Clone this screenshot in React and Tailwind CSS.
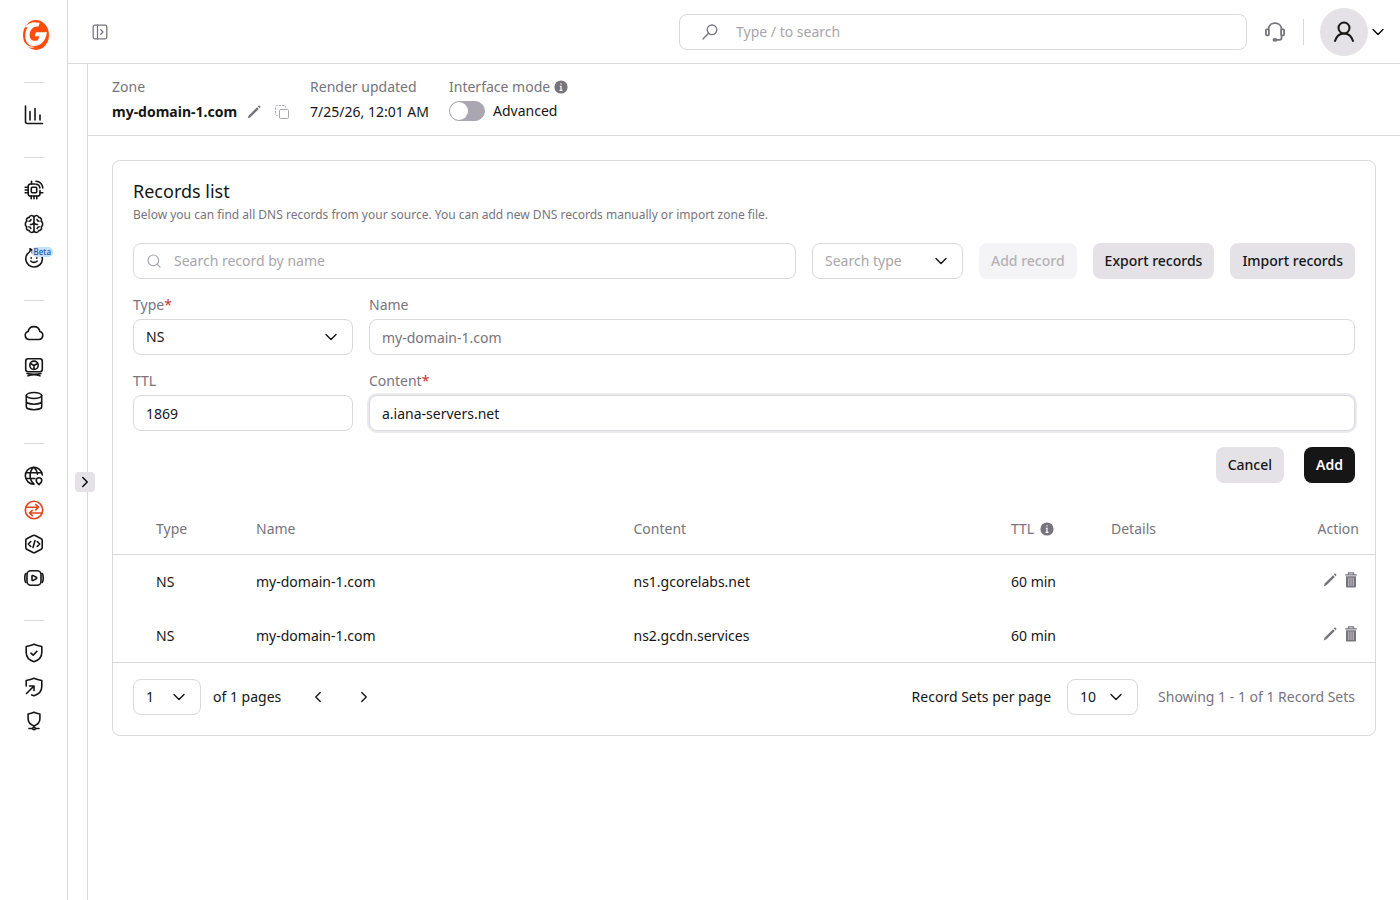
import { useState } from "react";
import clsx from "clsx";
import { ChevronDown, ChevronLeft, ChevronRight, Search } from "lucide-react";

const FIELD =
  "h-9 w-full rounded-lg border border-[#d9d8dc] bg-white px-3 text-sm text-[#161616] outline-none";

const Icon = ({ children, className = "size-5", stroke = "1.6", box = "0 0 20 20" }) => (
  <svg
    viewBox={box}
    className={clsx("shrink-0", className)}
    fill="none"
    stroke="currentColor"
    strokeWidth={stroke}
    strokeLinecap="round"
    strokeLinejoin="round"
    aria-hidden="true"
  >
    {children}
  </svg>
);

const Logo = () => (
  <svg viewBox="0 0 78 90" className="h-[30px] w-[26px]" aria-hidden="true">
    <ellipse cx="39" cy="45" rx="39" ry="45" fill="#ff4c0c" />
    <path
      d="M5 22C16 8 32 4 50 9l-4 11C30 17 21 30 20 44c0 13 7 19 19 18l6-1 4-12H35l4-12h33C68 63 54 78 33 78 18 78 8 68 7 50 6 40 9 30 14 22Z"
      fill="#fff"
    />
    <path d="M4 66c8 12 20 16 32 14-10 6-22 3-28-6Z" fill="#fff" />
  </svg>
);

const Chip = () => (
  <Icon>
    <path d="M11 4H6.5A2.3 2.3 0 0 0 4.2 6.3v7.4A2.3 2.3 0 0 0 6.5 16h7.2a2.3 2.3 0 0 0 2.3-2.3V10.5" />
    <rect x="7.3" y="7.3" width="5.4" height="5.4" rx="1" />
    <path d="M1.2 7.2h3M1.2 10h3M1.2 12.800h3M7.2 16v2.8M10 16v2.8M12.8 16v2.8M16 12.8h2.8M7.5 1.2V4M12 1.2A7 7 0 0 1 18.8 8M12 4.2A4 4 0 0 1 15.8 8" />
  </Icon>
);

const Brain = () => (
  <Icon>
    <path d="M10 3.500v13M10 3.500C9.500 1 6 .600 5.300 3.400 3 3.200 1.800 5.500 2.900 7.200.800 8.300.800 11.500 2.700 12.700 1.800 15 3.300 16.700 5.300 16.600 6 19.200 9.500 19 10 16.500M10 3.500C10.500 1 14 .600 14.700 3.400 17 3.200 18.200 5.500 17.100 7.200c2.100 1.100 2.100 4.300.2 5.500.9 2.300-.6 4-2.600 3.900C14 19.200 10.500 19 10 16.500" />
    <path d="M10 8.500C9.500 10 8 10.700 6.500 10.500M10 8.500c.5 1.500 2 2.200 3.500 2M7 5.500C6.800 6.500 6 7.200 5 7.200M13 5.500c.2 1 1 1.700 2 1.700M6.800 14.500c-.2-1-1-1.600-2-1.700M13.200 14.500c.2-1 1-1.600 2-1.700" />
  </Icon>
);

const Assistant = () => (
  <span className="relative block">
    <Icon>
      <path d="M16.500 5.500A8.300 8.300 0 1 1 3.300 6C5.200 4.600 7.300 3.200 6 .8c2 .9 2.800 2.300 2.300 4" />
      <path d="M7.200 9.800v.4M12.8 9.800v.4M6.800 13c1.800 1.900 4.600 1.900 6.400 0" />
    </Icon>
    <span className="absolute -top-px left-2 rounded-full bg-[#c3dffa] px-0.5 text-[8px] leading-[10px] font-medium text-[#22549b]">
      Beta
    </span>
  </span>
);

const groups = [
  [
    {
      name: "Reports",
      icon: (
        <Icon>
          <path d="M1.5 1v15.5a2 2 0 0 0 2 2h15M6 6.500v8.500M11 3.500V15M16 10v5" />
        </Icon>
      ),
    },
  ],
  [
    { name: "Edge compute", icon: <Chip /> },
    { name: "Everywhere AI", icon: <Brain /> },
    { name: "AI assistant", icon: <Assistant /> },
  ],
  [
    {
      name: "Cloud",
      icon: (
        <Icon>
          <path d="M5 16.5a4.1 4.1 0 0 1-.9-8A6 6 0 0 1 15.9 8.500a4.1 4.1 0 0 1-.9 8Z" />
        </Icon>
      ),
    },
    {
      name: "Hosting",
      icon: (
        <Icon>
          <rect x="1.7" y="1.8" width="16.6" height="13" rx="2.5" />
          <circle cx="10" cy="8.3" r="4.2" />
          <path d="M10 8.5v3.8M10 8.500 6.800 6.700M10 8.500l3.200-1.800M3 16.500c4 .8 10 .8 14 0M4 18.800c3.500-1.300 8.500-1.300 12 0" />
        </Icon>
      ),
    },
    {
      name: "Storage",
      icon: (
        <Icon>
          <ellipse cx="10" cy="4.5" rx="7.7" ry="3" />
          <path d="M2.3 4.500v11.200c0 1.700 3.400 3 7.700 3s7.700-1.300 7.700-3V4.500M2.300 10.200c0 1.700 3.400 3 7.700 3s7.700-1.300 7.700-3" />
        </Icon>
      ),
    },
  ],
  [
    {
      name: "CDN",
      icon: (
        <Icon>
          <path d="M18.3 9A8.5 8.5 0 1 0 10 18.2M1.8 6.800h16M1.800 12.500h9M9.800 1.200C4.800 5.500 4.800 13.500 10 18.200M9.800 1.200c2.200 2 3.400 4.400 3.700 7" />
          <path d="M15 18.600c-1.800-1.500-2.800-2.800-2.800-4.100a2.800 2.800 0 0 1 5.600 0c0 1.300-1 2.600-2.800 4.100Z" />
        </Icon>
      ),
    },
    {
      name: "DNS",
      active: true,
      icon: (
        <Icon>
          <circle cx="10" cy="10" r="8.7" />
          <path d="M2 7.200h12.500M11.700 4.500l2.800 2.700-2.800 2.700M18 13H5.500M8.300 10.300 5.500 13l2.800 2.700" />
        </Icon>
      ),
    },
    {
      name: "FastEdge",
      icon: (
        <Icon>
          <path d="M9 1.500a2 2 0 0 1 2 0l6.300 3.300a1.600 1.600 0 0 1 .9 1.500v7.400a1.600 1.600 0 0 1-.9 1.500L11 18.500a2 2 0 0 1-2 0l-6.300-3.300a1.600 1.600 0 0 1-.9-1.500V6.300a1.600 1.600 0 0 1 .9-1.500Z" />
          <path d="m6.800 7.500-2.500 2.500 2.500 2.500M13.200 7.500l2.500 2.500-2.500 2.500M11 6.500l-2 7" />
        </Icon>
      ),
    },
    {
      name: "Streaming",
      icon: (
        <Icon>
          <rect x="3" y="2.7" width="14" height="14.6" rx="4" />
          <path d="M2 5.500C.8 6 .8 7 .8 10s0 4 1.200 4.500M18 5.500c1.200.5 1.200 1.500 1.200 4.500s0 4-1.200 4.500M8 8.300v3.400c0 .8.7 1 1.300.7l3-1.700c.6-.4.6-1 0-1.400l-3-1.700C8.700 7.300 8 7.500 8 8.300Z" />
        </Icon>
      ),
    },
  ],
  [
    {
      name: "Web security",
      icon: (
        <Icon>
          <path d="M10 1.300c2.500 1.200 5 1.800 7.800 2.200v6c0 4.700-3 7.700-7.800 9.300-4.800-1.600-7.800-4.600-7.800-9.300v-6C5 3.100 7.500 2.500 10 1.300Z" />
          <path d="m7 10.200 2.200 2 3.600-3.800" />
        </Icon>
      ),
    },
    {
      name: "DDoS protection",
      icon: (
        <Icon>
          <path d="M2.200 9V3.500C5 3.100 7.500 2.500 10 1.300c2.500 1.200 5 1.800 7.800 2.200v6c0 4.700-3 7.700-7.800 9.300l-2.300-.9M2.500 16.500l7.500-7.500M5.500 9H10v4.500" />
        </Icon>
      ),
    },
    {
      name: "WAAP",
      icon: (
        <Icon>
          <path d="M10 1.300c1.800.9 3.600 1.400 5.900 1.700v4.700c0 3.400-2 5.800-5.900 7.200-3.900-1.400-5.900-3.800-5.900-7.200V3c2.300-.3 4.100-.8 5.900-1.700ZM10 15v1M5 17.500h3.500M11.500 17.500H15" />
          <circle cx="10" cy="17.500" r="1.300" />
        </Icon>
      ),
    },
  ],
];

const Pencil = () => (
  <svg viewBox="0 0 16 16" className="size-4 shrink-0" fill="currentColor" aria-hidden="true">
    <path d="m1.700 14.500 1-2.900 8.400-8.400 1.700 1.700-8.400 8.400-2.700 1.200ZM11.800 2.500l.7-.7c.4-.4.8-.4 1.200 0l.5.5c.4.4.4.8 0 1.200l-.7.7Z" />
  </svg>
);

const Trash = () => (
  <svg viewBox="0 0 14 18" className="h-[18px] w-3.5 shrink-0" aria-hidden="true">
    <path d="M4.500 3.300V1.800h5v1.500M1.200 3.900h11.600" fill="none" stroke="currentColor" strokeWidth="1.3" />
    <path d="M2 5.200h10v10c0 .8-.5 1.300-1.300 1.300H3.300c-.8 0-1.300-.5-1.300-1.300Z" fill="currentColor" />
    <path d="M4.800 6.500v8.500M7 6.500v8.500M9.200 6.500v8.500" stroke="#fff" strokeWidth=".6" />
  </svg>
);

const Info = () => (
  <svg viewBox="0 0 14 14" className="size-3.5 shrink-0" aria-hidden="true">
    <circle cx="7" cy="7" r="6.6" fill="#77747d" />
    <path d="M7 3.200v1.400M5.800 6.300H7v3.900M5.500 10.300h3" fill="none" stroke="#fff" strokeWidth="1.2" />
  </svg>
);

const Select = ({ className, chevron = "right-3", children, ...rest }) => (
  <div className={clsx("relative", className)}>
    <select {...rest} className={clsx(FIELD, "appearance-none", rest.value === "" && "text-[#a8a6ac]")}>
      {children}
    </select>
    <ChevronDown
      className={clsx("pointer-events-none absolute top-2 size-5 text-[#161616]", chevron)}
      strokeWidth={1.7}
    />
  </div>
);

const Button = ({ tone = "secondary", children, ...rest }) => (
  <button
    type="button"
    {...rest}
    className={clsx(
      "h-9 shrink-0 rounded-lg px-3 text-sm",
      tone === "secondary" && "bg-[#e4e2e7] font-medium text-[#161616]",
      tone === "disabled" && "bg-[#f4f3f5] font-medium text-[#b4b2b7]",
      tone === "primary" && "bg-[#161616] font-semibold text-white"
    )}
  >
    {children}
  </button>
);

const Label = ({ htmlFor, required, children }) => (
  <label htmlFor={htmlFor} className="mb-1 block text-sm leading-5 text-[#77747d]">
    {children}
    {required && <span className="text-[#c9342b]">*</span>}
  </label>
);

const Sidebar = () => (
  <nav className="w-[68px] shrink-0 border-r border-[#d9d8dc]" aria-label="Products">
    <a href="#home" aria-label="Home" className="ml-[23px] flex h-[82px] pt-5">
      <Logo />
    </a>
    {groups.map((items) => (
      <div key={items[0].name} className="flex flex-col items-center pb-8">
        <div className="h-px w-5 bg-[#d9d8dc]" />
        <ul className="mt-[22px] flex flex-col gap-3.5">
          {items.map((item) => (
            <li key={item.name}>
              <a
                href="#product"
                aria-label={item.name}
                className={clsx("block", item.active ? "text-[#e0471c]" : "text-[#161616]")}
              >
                {item.icon}
              </a>
            </li>
          ))}
        </ul>
      </div>
    ))}
  </nav>
);

const TopBar = () => (
  <header className="flex h-16 items-center border-b border-[#d9d8dc] pr-3 pl-6">
    <button type="button" aria-label="Expand menu" className="text-[#77747d]">
      <Icon className="size-4" stroke="1.3" box="0 0 16 16">
        <rect x="1.2" y="1.2" width="13.6" height="13.6" rx="1.5" />
        <path d="M5.500 1.200v13.600M8.800 5.800 11 8l-2.200 2.200" />
      </Icon>
    </button>
    <label className="ml-auto flex h-9 w-[568px] items-center rounded-lg border border-[#d9d8dc] px-5">
      <Icon className="mx-0.5 size-4 text-[#77747d]" stroke="1.3" box="0 0 16 16">
        <circle cx="10" cy="5.800" r="4.800" />
        <path d="M6.500 9.300 1 15" />
      </Icon>
      <input
        type="text"
        placeholder="Type / to search"
        className="ml-4 w-full text-sm outline-none placeholder:text-[#a8a6ac]"
      />
    </label>
    <button type="button" aria-label="Support" className="ml-[18px] text-[#77747d]">
      <Icon className="size-5" stroke="1.8">
        <path d="M3.500 7.500C3.500 3.500 6.300 1.200 10 1.200s6.500 2.300 6.500 6.300M16.500 13.500V16c0 1.200-.8 1.800-2 1.800H11" />
        <rect x=".9" y="7.300" width="3" height="6" rx="1" />
        <rect x="16.1" y="7.300" width="3" height="6" rx="1" />
        <ellipse cx="10" cy="17.800" rx="1.600" ry="1" fill="currentColor" />
      </Icon>
    </button>
    <div className="ml-[18px] h-[26px] w-px bg-[#d9d8dc]" />
    <button type="button" aria-label="Account" className="ml-4 flex items-center">
      <span className="grid size-12 place-items-center rounded-full bg-[#e4e2e7] text-[#161616]">
        <Icon className="size-6" stroke="2" box="0 0 24 24">
          <circle cx="12" cy="8" r="5.500" />
          <path d="M3 21c1.500-5 5-7.500 9-7.500s7.500 2.500 9 7.500" />
        </Icon>
      </span>
      <ChevronDown className="size-5" strokeWidth={1.5} />
    </button>
  </header>
);

const ZoneBar = () => (
  <section className="flex h-[72px] gap-5 border-b border-[#d9d8dc] px-6 pt-[13px] text-sm leading-5">
    <div>
      <div className="text-[#77747d]">Zone</div>
      <div className="mt-[5px] flex items-center text-[#77747d]">
        <strong className="font-bold text-[#161616]">my-domain-1.com</strong>
        <button type="button" aria-label="Edit zone" className="ml-[9px]">
          <Pencil />
        </button>
        <button type="button" aria-label="Copy zone" className="ml-3 text-[#a8a6ac]">
          <Icon className="size-4" stroke="1" box="0 0 16 16">
            <rect x="5.500" y="5.500" width="9" height="9" rx="1" />
            <path d="M3 11.500H2.500a1 1 0 0 1-1-1V2.500a1 1 0 0 1 1-1h8a1 1 0 0 1 1 1V3" strokeDasharray="1.5 2" />
          </Icon>
        </button>
      </div>
    </div>
    <div>
      <div className="text-[#77747d]">Render updated</div>
      <div className="mt-[5px] text-[#161616]">7/25/26, 12:01 AM</div>
    </div>
    <div>
      <div className="flex items-center gap-1 text-[#77747d]">
        Interface mode
        <Info />
      </div>
      <label className="mt-1 flex items-center gap-2 text-[#161616]">
        <input
          type="checkbox"
          role="switch"
          className="h-5 w-9 appearance-none rounded-full border border-[#aba7b2] bg-[#aba7b2] before:block before:size-[18px] before:rounded-full before:bg-white checked:bg-[#161616] checked:before:translate-x-4"
        />
        Advanced
      </label>
    </div>
  </section>
);

const records = [
  { type: "NS", name: "my-domain-1.com", content: "ns1.gcorelabs.net", ttl: "60 min" },
  { type: "NS", name: "my-domain-1.com", content: "ns2.gcdn.services", ttl: "60 min" },
];

const RecordForm = () => {
  const [form, setForm] = useState({ type: "NS", name: "", ttl: "1869", content: "a.iana-servers.net" });
  const update = (key) => (e) => setForm({ ...form, [key]: e.target.value });

  return (
    <form className="mt-4 px-5" onSubmit={(e) => e.preventDefault()}>
      <div className="grid grid-cols-[220px_1fr] gap-4">
        <div>
          <Label htmlFor="type" required>Type</Label>
          <Select id="type" value={form.type} onChange={update("type")}>
            <option>NS</option>
            <option>A</option>
            <option>CNAME</option>
          </Select>
        </div>
        <div>
          <Label htmlFor="name">Name</Label>
          <input
            id="name"
            value={form.name}
            onChange={update("name")}
            placeholder="my-domain-1.com"
            className={clsx(FIELD, "placeholder:text-[#77747d]")}
          />
        </div>
        <div>
          <Label htmlFor="ttl">TTL</Label>
          <input id="ttl" value={form.ttl} onChange={update("ttl")} className={FIELD} />
        </div>
        <div>
          <Label htmlFor="content" required>Content</Label>
          <input
            id="content"
            value={form.content}
            onChange={update("content")}
            className={clsx(FIELD, "ring-2 ring-[#eceaee]")}
          />
        </div>
      </div>
      <div className="mt-4 flex justify-end gap-5">
        <Button>Cancel</Button>
        <Button tone="primary">Add</Button>
      </div>
    </form>
  );
};

const RecordsTable = () => (
  <table className="mt-[21px] w-full table-fixed text-left text-sm text-[#161616]">
    <thead className="text-[#77747d]">
      <tr className="h-[50px] border-b border-[#d9d8dc]">
        <th className="w-[143px] pl-[43px] font-normal">Type</th>
        <th className="font-normal">Name</th>
        <th className="font-normal">Content</th>
        <th className="w-[100px] font-normal">
          <span className="flex items-center gap-1.5">
            TTL <Info />
          </span>
        </th>
        <th className="w-[148px] font-normal">Details</th>
        <th className="w-[116px] pr-4 text-right font-normal">Action</th>
      </tr>
    </thead>
    <tbody className="border-b border-[#d9d8dc]">
      {records.map((r) => (
        <tr key={r.content} className="h-[54px]">
          <td className="pt-0.5 pl-[43px]">{r.type}</td>
          <td className="pt-0.5">{r.name}</td>
          <td className="pt-0.5">{r.content}</td>
          <td className="pt-0.5">{r.ttl}</td>
          <td />
          <td className="pr-[17px] pb-0.5">
            <div className="flex items-center justify-end gap-1.5 text-[#77747d]">
              <button type="button" aria-label="Edit record">
                <Pencil />
              </button>
              <button type="button" aria-label="Delete record">
                <Trash />
              </button>
            </div>
          </td>
        </tr>
      ))}
    </tbody>
  </table>
);

const Pagination = () => (
  <div className="flex items-center px-5 pt-4 pb-5 text-sm text-[#161616]">
    <Select aria-label="Page" className="w-[68px]" defaultValue="1">
      <option>1</option>
    </Select>
    <span className="ml-3">of 1 pages</span>
    <button type="button" aria-label="Previous page" className="ml-7">
      <ChevronLeft className="size-[18px]" strokeWidth={1.8} />
    </button>
    <button type="button" aria-label="Next page" className="ml-7">
      <ChevronRight className="size-[18px]" strokeWidth={1.8} />
    </button>
    <label htmlFor="per-page" className="ml-auto">Record Sets per page</label>
    <Select id="per-page" className="ml-4 w-[71px]" defaultValue="10">
      <option>10</option>
      <option>25</option>
    </Select>
    <span className="ml-5 text-[#77747d]">Showing 1 - 1 of 1 Record Sets</span>
  </div>
);

export default function App() {
  const [searchType, setSearchType] = useState("");

  return (
    <div className="flex min-h-screen bg-white font-['Noto_Sans',sans-serif]">
      <Sidebar />
      <div className="flex min-w-0 flex-1 flex-col">
        <TopBar />
        <div className="flex flex-1">
          <aside className="relative w-5 shrink-0 border-r border-[#d9d8dc]">
            <button
              type="button"
              aria-label="Open section menu"
              className="absolute top-[408px] left-[7px] grid size-5 place-items-center rounded bg-[#e4e2e7]"
            >
              <ChevronRight className="size-[18px]" strokeWidth={1.8} />
            </button>
          </aside>
          <div className="min-w-0 flex-1">
            <ZoneBar />
            <main className="p-6">
              <section className="rounded-lg border border-[#d9d8dc]">
                <div className="px-5 pt-[18px]">
                  <h1 className="text-lg leading-6 text-[#161616]">Records list</h1>
                  <p className="mt-0.5 text-xs leading-5 text-[#77747d]">
                    Below you can find all DNS records from your source. You can add new DNS records manually or
                    import zone file.
                  </p>
                  <div className="mt-[18px] flex gap-4">
                    <label className="flex h-9 min-w-0 flex-1 items-center gap-3 rounded-lg border border-[#d9d8dc] px-3">
                      <Search className="size-4 shrink-0 text-[#a8a6ac]" strokeWidth={1.8} />
                      <input
                        type="text"
                        placeholder="Search record by name"
                        className="w-full text-sm outline-none placeholder:text-[#a8a6ac]"
                      />
                    </label>
                    <Select
                      aria-label="Search type"
                      className="w-[151px] shrink-0"
                      value={searchType}
                      onChange={(e) => setSearchType(e.target.value)}
                    >
                      <option value="">Search type</option>
                      <option>NS</option>
                    </Select>
                    <Button tone="disabled" disabled>Add record</Button>
                    <Button>Export records</Button>
                    <Button>Import records</Button>
                  </div>
                </div>
                <RecordForm />
                <RecordsTable />
                <Pagination />
              </section>
            </main>
          </div>
        </div>
      </div>
    </div>
  );
}
